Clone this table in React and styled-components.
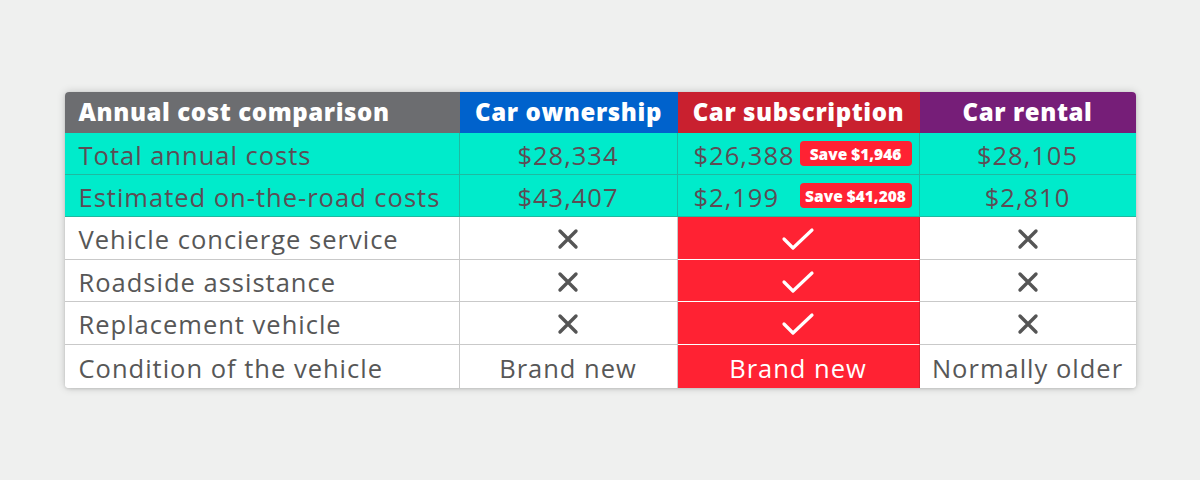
import React from 'react';
import styled, { createGlobalStyle } from 'styled-components';

const GlobalStyle = createGlobalStyle`
  html, body {
    margin: 0;
    padding: 0;
    background: #eff0ef;
  }
  body {
    font-family: 'Open Sans', 'Liberation Sans', sans-serif;
  }
`;

const Page = styled.div`
  width: 1200px;
  height: 480px;
  display: flex;
  align-items: center;
  justify-content: center;
`;

const Table = styled.div`
  display: grid;
  grid-template-columns: 395px 218px 242px 216px;
  grid-template-rows: 41px 42px 42px 43px 42px 43px 43px;
  border-radius: 4px;
  overflow: hidden;
  background: #fff;
  box-shadow: 0 0 8px rgba(0, 0, 0, 0.18), 0 1px 3px rgba(0, 0, 0, 0.12);
`;

const headColors = {
  label: '#6c6d70',
  own: '#0062cc',
  sub: '#c9202f',
  rent: '#761e78',
};

const HeadCell = styled.div`
  display: flex;
  align-items: center;
  justify-content: ${(p) => (p.$kind === 'label' ? 'flex-start' : 'center')};
  padding: 0 ${(p) => (p.$kind === 'label' ? '14px' : '0')};
  background: ${(p) => headColors[p.$kind]};
  color: #fff;
  font-weight: 800;
  font-size: 24px;
  letter-spacing: 0.6px;
  padding-bottom: 2px;
`;

const Cell = styled.div`
  display: flex;
  align-items: center;
  justify-content: ${(p) => (p.$label ? 'flex-start' : p.$split ? 'space-between' : 'center')};
  padding: ${(p) => (p.$label ? '0 14px' : p.$split ? '0 7px 0 16px' : '0')};
  padding-top: 2px;
  font-size: 25.5px;
  letter-spacing: 1px;
  color: ${(p) => (p.$tone === 'teal' ? '#5d4c54' : p.$tone === 'red' ? '#fff' : '#575757')};
  background: ${(p) => (p.$tone === 'teal' ? '#00ebcb' : p.$tone === 'red' ? '#ff2233' : '#fff')};
  border-right: 1px solid
    ${(p) => (p.$tone === 'teal' ? '#1fb9a0' : p.$tone === 'red' ? '#d81f2d' : '#c9c9c9')};
  border-bottom: 1px solid
    ${(p) => (p.$tone === 'teal' ? '#1fb9a0' : p.$tone === 'red' ? '#ffffff' : '#c9c9c9')};
  ${(p) => (p.$last ? 'border-right: none;' : '')}
  ${(p) => (p.$bottom ? 'border-bottom: none;' : '')}
`;

const SaveBadge = styled.span`
  display: inline-flex;
  align-items: center;
  justify-content: center;
  width: 112px;
  height: 25px;
  margin-top: -2px;
  border-radius: 4px;
  background: #ff2233;
  color: #fff;
  font-weight: 800;
  font-size: 15.5px;
  letter-spacing: 0;
`;

const Cross = () => (
  <svg width="22" height="22" viewBox="0 0 22 22">
    <path d="M3 3 L19 19 M19 3 L3 19" stroke="#555" strokeWidth="3.4" strokeLinecap="round" fill="none" />
  </svg>
);

const Tick = () => (
  <svg width="34" height="26" viewBox="0 0 34 26">
    <path d="M3 13 L12 22 L31 4" stroke="#fff" strokeWidth="3.2" strokeLinecap="round" strokeLinejoin="round" fill="none" />
  </svg>
);

const costRows = [
  { label: 'Total annual costs', own: '$28,334', sub: '$26,388', save: 'Save $1,946', rent: '$28,105' },
  { label: 'Estimated on-the-road costs', own: '$43,407', sub: '$2,199', save: 'Save $41,208', rent: '$2,810' },
];

const featureRows = ['Vehicle concierge service', 'Roadside assistance', 'Replacement vehicle'];

export default function App() {
  return (
    <>
      <GlobalStyle />
      <Page>
        <Table>
          <HeadCell $kind="label">Annual cost comparison</HeadCell>
          <HeadCell $kind="own">Car ownership</HeadCell>
          <HeadCell $kind="sub">Car subscription</HeadCell>
          <HeadCell $kind="rent">Car rental</HeadCell>

          {costRows.map((r) => (
            <React.Fragment key={r.label}>
              <Cell $label $tone="teal">{r.label}</Cell>
              <Cell $tone="teal">{r.own}</Cell>
              <Cell $split $tone="teal">
                {r.sub}
                <SaveBadge>{r.save}</SaveBadge>
              </Cell>
              <Cell $tone="teal" $last>{r.rent}</Cell>
            </React.Fragment>
          ))}

          {featureRows.map((label) => (
            <React.Fragment key={label}>
              <Cell $label>{label}</Cell>
              <Cell><Cross /></Cell>
              <Cell $tone="red"><Tick /></Cell>
              <Cell $last><Cross /></Cell>
            </React.Fragment>
          ))}

          <Cell $label $bottom>Condition of the vehicle</Cell>
          <Cell $bottom>Brand new</Cell>
          <Cell $tone="red" $bottom>Brand new</Cell>
          <Cell $last $bottom>Normally older</Cell>
        </Table>
      </Page>
    </>
  );
}
